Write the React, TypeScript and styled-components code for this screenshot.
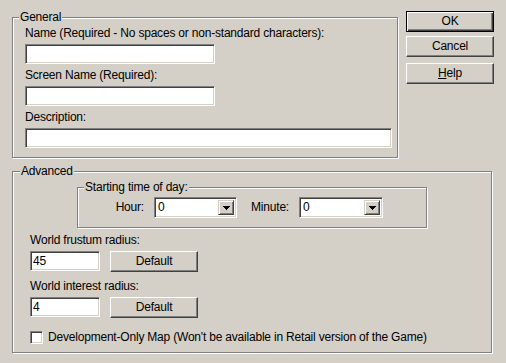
import React from 'react';
import styled, { createGlobalStyle } from 'styled-components';

const GlobalStyle = createGlobalStyle`
  html, body {
    margin: 0;
    padding: 0;
    background: #d4d0c8;
  }
  body {
    font-family: "Liberation Sans", Arial, sans-serif;
    font-size: 12px;
    line-height: 13px;
    letter-spacing: -0.2px;
    color: #000;
  }
`;

const Dialog = styled.div`
  width: 506px;
  height: 363px;
  box-sizing: border-box;
  padding: 11px 0 0 12px;
  background: #d4d0c8;
  display: flex;
  flex-direction: column;
`;

const TopRow = styled.div`
  display: flex;
  align-items: flex-start;
`;

const Group = styled.fieldset<{ $width: number; $pad: string }>`
  margin: 0;
  min-width: 0;
  box-sizing: border-box;
  width: ${p => p.$width}px;
  padding: ${p => p.$pad};
  border: 1px solid #808080;
  box-shadow: inset 1px 1px 0 #fff, 1px 1px 0 #fff;
  display: flex;
  flex-direction: column;
  align-items: flex-start;
`;

const AdvancedGroup = styled(Group)`
  margin-top: 7px;
`;

const Caption = styled.legend<{ $offset: number }>`
  padding: 0 1px;
  margin-left: ${p => p.$offset}px;
  background: #d4d0c8;
  line-height: 13px;
`;

const Field = styled.div<{ $top: number }>`
  display: flex;
  flex-direction: column;
  align-items: flex-start;
  gap: 4px;
  margin-top: ${p => p.$top}px;
`;

const Label = styled.span`
  white-space: nowrap;
`;

const TextBox = styled.input<{ $width: number }>`
  width: ${p => p.$width}px;
  height: 20px;
  box-sizing: border-box;
  margin: 0;
  padding: 0 2px;
  background: #fff;
  border: 1px solid;
  border-color: #808080 #fff #fff #808080;
  box-shadow: inset 1px 1px 0 #404040, inset -1px -1px 0 #d4d0c8;
  font: inherit;
  letter-spacing: inherit;
  color: #000;
  outline: none;
`;

const ButtonColumn = styled.div`
  display: flex;
  flex-direction: column;
  margin-left: 8px;
`;

const PushButton = styled.button<{ $width: number; $default?: boolean; $gap?: number }>`
  width: ${p => p.$width}px;
  height: 21px;
  margin: ${p => p.$gap ?? 0}px 0 0 0;
  padding: 0;
  box-sizing: border-box;
  background: #d4d0c8;
  font: inherit;
  letter-spacing: inherit;
  color: #000;
  cursor: default;
  ${p =>
    p.$default
      ? `border: 1px solid #000;
         box-shadow: inset 1px 1px 0 #fff, inset -1px -1px 0 #404040, inset -2px -2px 0 #808080;`
      : `border: 1px solid;
         border-color: #fff #404040 #404040 #fff;
         box-shadow: inset -1px -1px 0 #808080;`}
`;

const SubGroup = styled(Group)`
  margin: 3px 0 0 47px;
`;

const TimeRow = styled.div`
  display: flex;
  align-items: center;
`;

const TimeLabel = styled.span<{ $width: number }>`
  width: ${p => p.$width}px;
  margin-right: 10px;
  text-align: right;
  white-space: nowrap;
`;

const Combo = styled.div<{ $width: number }>`
  width: ${p => p.$width}px;
  height: 21px;
  box-sizing: border-box;
  display: flex;
  align-items: stretch;
  padding: 2px;
  background: #fff;
  border: 1px solid;
  border-color: #808080 #fff #fff #808080;
  box-shadow: inset 1px 1px 0 #404040, inset -1px -1px 0 #d4d0c8;
`;

const ComboValue = styled.span`
  flex: 1;
  display: flex;
  align-items: center;
  padding-left: 1px;
`;

const DropButton = styled.span`
  width: 16px;
  box-sizing: border-box;
  display: flex;
  align-items: center;
  justify-content: center;
  background: #d4d0c8;
  border: 1px solid;
  border-color: #d4d0c8 #404040 #404040 #d4d0c8;
  box-shadow: inset 1px 1px 0 #fff, inset -1px -1px 0 #808080;
`;

const ValueRow = styled.div`
  display: flex;
  align-items: flex-start;
  gap: 10px;
`;

const CheckRow = styled.label`
  display: flex;
  align-items: center;
  gap: 5px;
  margin-top: 13px;
  white-space: nowrap;
`;

const CheckBox = styled.span`
  width: 13px;
  height: 13px;
  box-sizing: border-box;
  background: #fff;
  border: 1px solid;
  border-color: #808080 #fff #fff #808080;
  box-shadow: inset 1px 1px 0 #404040, inset -1px -1px 0 #d4d0c8;
`;

function ComboBox({ width, value }: { width: number; value: string }) {
  return (
    <Combo $width={width}>
      <ComboValue>{value}</ComboValue>
      <DropButton>
        <svg width="7" height="4" viewBox="0 0 7 4">
          <path d="M0 0h7v1H0zM1 1h5v1H1zM2 2h3v1H2zM3 3h1v1H3z" fill="#000" />
        </svg>
      </DropButton>
    </Combo>
  );
}

export default function App() {
  return (
    <>
      <GlobalStyle />
      <Dialog>
        <TopRow>
          <Group $width={386} $pad="3px 5px 9px 12px">
            <Caption $offset={-6}>General</Caption>
            <Field $top={0}>
              <Label>Name (Required - No spaces or non-standard characters):</Label>
              <TextBox $width={190} readOnly value="" />
            </Field>
            <Field $top={5}>
              <Label>Screen Name (Required):</Label>
              <TextBox $width={190} readOnly value="" />
            </Field>
            <Field $top={5}>
              <Label>Description:</Label>
              <TextBox $width={367} readOnly value="" />
            </Field>
          </Group>
          <ButtonColumn>
            <PushButton $width={88} $default>OK</PushButton>
            <PushButton $width={88} $gap={4}>Cancel</PushButton>
            <PushButton $width={88} $gap={6}><u>H</u>elp</PushButton>
          </ButtonColumn>
        </TopRow>

        <AdvancedGroup $width={480} $pad="0 5px 8px 17px">
          <Caption $offset={-10}>Advanced</Caption>
          <SubGroup $width={350} $pad="3px 0 9px 0">
            <Caption $offset={6}>Starting time of day:</Caption>
            <TimeRow>
              <TimeLabel $width={66}>Hour:</TimeLabel>
              <ComboBox width={83} value="0" />
              <TimeLabel $width={52}>Minute:</TimeLabel>
              <ComboBox width={84} value="0" />
            </TimeRow>
          </SubGroup>
          <Field $top={6}>
            <Label>World frustum radius:</Label>
            <ValueRow>
              <TextBox $width={70} readOnly value="45" />
              <PushButton $width={88}>Default</PushButton>
            </ValueRow>
          </Field>
          <Field $top={8}>
            <Label>World interest radius:</Label>
            <ValueRow>
              <TextBox $width={70} readOnly value="4" />
              <PushButton $width={88}>Default</PushButton>
            </ValueRow>
          </Field>
          <CheckRow>
            <CheckBox />
            <span>Development-Only Map (Won't be available in Retail version of the Game)</span>
          </CheckRow>
        </AdvancedGroup>
      </Dialog>
    </>
  );
}
